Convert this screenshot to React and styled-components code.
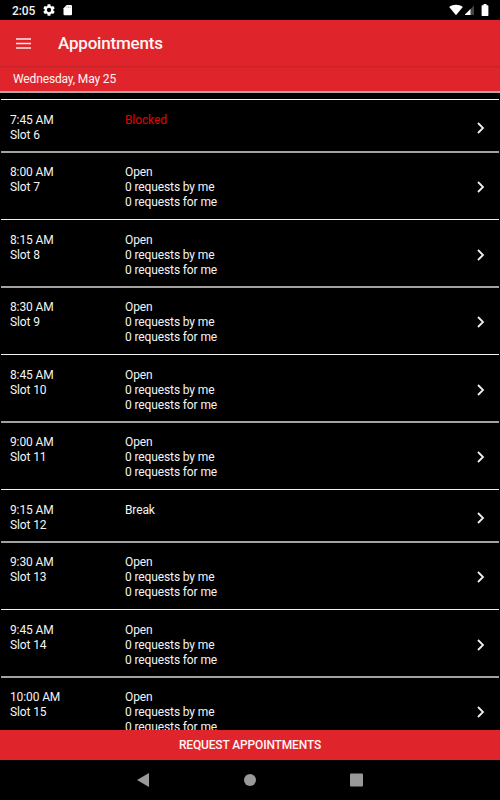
import React from 'react';
import styled, { createGlobalStyle } from 'styled-components';

const GlobalStyle = createGlobalStyle`
  * {
    box-sizing: border-box;
  }
  body {
    margin: 0;
    background: #000;
    font-family: Roboto, "Liberation Sans", sans-serif;
    color: #f4f4f4;
  }
`;

const Screen = styled.div`
  width: 500px;
  height: 800px;
  display: flex;
  flex-direction: column;
  overflow: hidden;
  background: #000;
`;

const StatusBar = styled.div`
  height: 20px;
  flex-shrink: 0;
  display: flex;
  align-items: center;
  justify-content: space-between;
  padding: 0 11px 0 12px;
`;

const StatusGroup = styled.div`
  display: flex;
  align-items: center;
  gap: ${({ $gap }) => $gap}px;
`;

const Clock = styled.span`
  font-size: 12px;
  font-weight: 500;
  line-height: 20px;
  letter-spacing: -0.1px;
  padding-top: 1px;
`;

const Header = styled.header`
  height: 47px;
  flex-shrink: 0;
  display: flex;
  align-items: center;
  padding-left: 16px;
  background: #e0242b;
  border-bottom: 1px solid #c92128;

  h1 {
    margin: 0 0 0 27px;
    font-size: 17px;
    font-weight: 500;
    line-height: 20px;
    letter-spacing: -0.2px;
    color: #fff5f5;
  }
`;

const MenuButton = styled.button`
  display: flex;
  padding: 0;
  border: none;
  background: none;
`;

const DateBar = styled.div`
  height: 26px;
  flex-shrink: 0;
  padding-left: 13px;
  background: #e0242b;
  border-top: 1px solid #d8232a;
  border-bottom: 2px solid #b5a5a6;
  font-size: 12px;
  line-height: 22px;
  letter-spacing: -0.14px;
  color: #fff5f5;
`;

const List = styled.main`
  flex: 1;
  min-height: 0;
  overflow: hidden;
  padding: 6px 1px 0;
`;

const Row = styled.div`
  height: ${({ $height }) => $height}px;
  display: flex;
  padding: ${({ $soft }) => ($soft ? '12px' : '13px')} 13px 0 9px;
  border-top: ${({ $soft }) => ($soft ? '2px solid #a2a2a2' : '1px solid #f0f0f0')};
  font-size: 12px;
  line-height: 15px;
  letter-spacing: -0.12px;
`;

const Time = styled.div`
  width: 115px;
`;

const Status = styled.div`
  flex: 1;
  color: ${({ $blocked }) => ($blocked ? '#e80000' : 'inherit')};
`;

const Arrow = styled.div`
  display: flex;
  align-items: center;
  height: ${({ $short }) => ($short ? 29 : 44)}px;
`;

const RequestButton = styled.button`
  height: 30px;
  flex-shrink: 0;
  padding: 0;
  border: none;
  background: #e0242b;
  font-family: inherit;
  font-size: 12px;
  font-weight: 500;
  line-height: 30px;
  letter-spacing: -0.15px;
  color: #fff5f5;
`;

const NavBar = styled.nav`
  height: 40px;
  flex-shrink: 0;
  display: flex;
  align-items: center;
  justify-content: center;
  gap: 94px;
`;

const slots = [
  { time: '7:45 AM', slot: 6, status: 'Blocked', height: 52 },
  { time: '8:00 AM', slot: 7, status: 'Open', height: 68 },
  { time: '8:15 AM', slot: 8, status: 'Open', height: 67 },
  { time: '8:30 AM', slot: 9, status: 'Open', height: 68 },
  { time: '8:45 AM', slot: 10, status: 'Open', height: 67 },
  { time: '9:00 AM', slot: 11, status: 'Open', height: 68 },
  { time: '9:15 AM', slot: 12, status: 'Break', height: 52 },
  { time: '9:30 AM', slot: 13, status: 'Open', height: 68 },
  { time: '9:45 AM', slot: 14, status: 'Open', height: 67 },
  { time: '10:00 AM', slot: 15, status: 'Open', height: 68 },
];

const SlotRow = ({ item, soft }) => {
  const open = item.status === 'Open';
  return (
    <Row $height={item.height} $soft={soft}>
      <Time>
        <div>{item.time}</div>
        <div>Slot {item.slot}</div>
      </Time>
      <Status $blocked={item.status === 'Blocked'}>
        <div>{item.status}</div>
        {open && <div>0 requests by me</div>}
        {open && <div>0 requests for me</div>}
      </Status>
      <Arrow $short={!open}>
        <svg width="10" height="14" viewBox="0 0 10 14">
          <path d="M2 2l5 5-5 5" fill="none" stroke="#eee" strokeWidth="1.8" />
        </svg>
      </Arrow>
    </Row>
  );
};

const App = () => {
  return (
    <>
      <GlobalStyle />
      <Screen>
        <StatusBar>
          <StatusGroup $gap={8}>
            <Clock>2:05</Clock>
            <svg width="12" height="12" viewBox="2 2 20 20">
              <path
                fill="#fff"
                d="M19.14 12.94c.04-.3.06-.61.06-.94s-.02-.64-.07-.94l2.03-1.58c.18-.14.23-.41.12-.61l-1.92-3.32c-.12-.22-.37-.29-.59-.22l-2.39.96c-.5-.38-1.03-.7-1.62-.94l-.36-2.54c-.04-.24-.24-.41-.48-.41h-3.84c-.24 0-.43.17-.47.41l-.36 2.54c-.59.24-1.13.57-1.62.94l-2.39-.96c-.22-.08-.47 0-.59.22L2.74 8.87c-.12.21-.08.47.12.61l2.03 1.58c-.05.3-.09.63-.09.94s.02.64.07.94l-2.03 1.58c-.18.14-.23.41-.12.61l1.92 3.32c.12.22.37.29.59.22l2.39-.96c.5.38 1.03.7 1.62.94l.36 2.54c.05.24.24.41.48.41h3.84c.24 0 .44-.17.47-.41l.36-2.54c.59-.24 1.13-.56 1.62-.94l2.39.96c.22.08.47 0 .59-.22l1.92-3.32c.12-.22.07-.47-.12-.61l-2.01-1.58zM12 15.6a3.6 3.6 0 110-7.2 3.6 3.6 0 010 7.2z"
              />
            </svg>
            <svg width="10" height="12" viewBox="0 0 10 12">
              <path fill="#fff" d="M3.7 1H8a1 1 0 011 1v8.2a1 1 0 01-1 1H1.500a1 1 0 01-1-1V4.200z" />
              <path stroke="#888" strokeWidth="0.6" d="M3.9 2.5v1.5M5.5 2.5v1.5M7.1 2.5v1.5" />
            </svg>
          </StatusGroup>
          <StatusGroup $gap={2}>
            <svg width="14" height="12" viewBox="0 0 14 12">
              <path fill="#fff" d="M7 11.2L0.2 3C2 1.5 4.4 0.7 7 0.7S12 1.5 13.8 3z" />
            </svg>
            <svg width="14" height="12" viewBox="0 0 14 12">
              <path fill="#444" d="M9 1.500v9.500H-0.500z" />
              <path fill="#fff" d="M5.500 5v6H-0.500z" />
            </svg>
            <svg width="8" height="12" viewBox="0 0 8 12">
              <path fill="#fff" d="M2.5 0h3v1.200h1.200a.7.7 0 01.7.7v9.400a.7.7 0 01-.7.7H1.300a.7.7 0 01-.7-.7V1.900a.7.7 0 01.7-.7h1.200z" />
            </svg>
          </StatusGroup>
        </StatusBar>
        <Header>
          <MenuButton aria-label="Menu">
            <svg width="15" height="11" viewBox="0 0 15 11">
              <path stroke="#fbeaea" strokeWidth="1.7" d="M0 1h15M0 5.500h15M0 10h15" />
            </svg>
          </MenuButton>
          <h1>Appointments</h1>
        </Header>
        <DateBar>Wednesday, May 25</DateBar>
        <List>
          {slots.map((item, index) => (
            <SlotRow key={item.slot} item={item} soft={index % 2 === 1} />
          ))}
        </List>
        <RequestButton>REQUEST APPOINTMENTS</RequestButton>
        <NavBar>
          <svg width="13" height="14" viewBox="0 0 13 14">
            <path fill="#999" d="M12 0v14L0 7z" />
          </svg>
          <svg width="12" height="12" viewBox="0 0 12 12">
            <circle cx="6" cy="6" r="6" fill="#999" />
          </svg>
          <svg width="13" height="14" viewBox="0 0 13 14">
            <rect x="0" y="0.500" width="13" height="13" rx="1" fill="#999" />
          </svg>
        </NavBar>
      </Screen>
    </>
  );
};

export default App;
